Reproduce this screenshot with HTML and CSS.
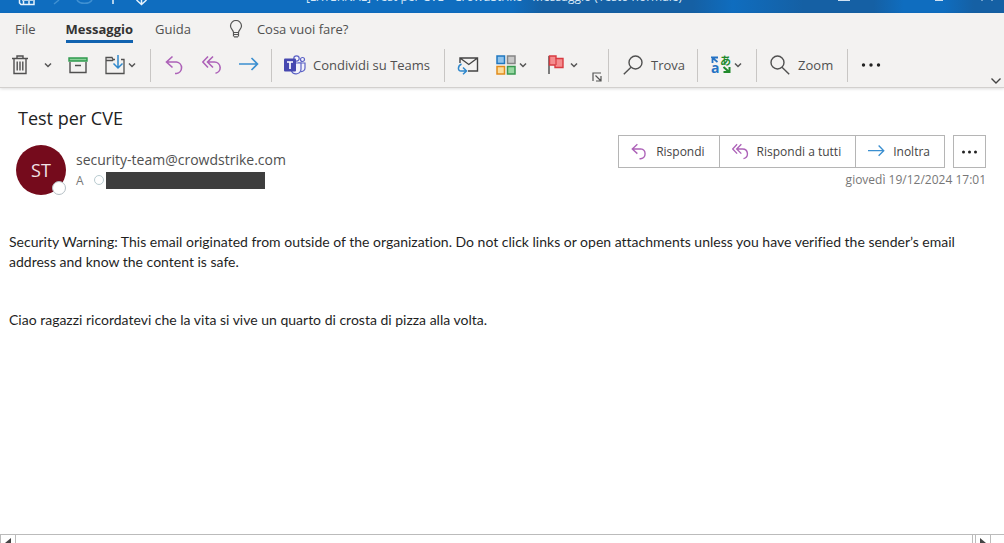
FILE: index.html
```html
<!DOCTYPE html>
<html lang="it">
<head>
<meta charset="utf-8">
<meta name="viewport" content="width=device-width, initial-scale=1">
<title>Test per CVE - Messaggio</title>
<link rel="stylesheet" href="styles.css">
</head>
<body>
<svg class="sprite" aria-hidden="true">
  <symbol id="chevron" viewBox="0 0 8 6"><path d="M1 1.5l3 3 3-3" fill="none" stroke="#555" stroke-width="1.5"/></symbol>
  <symbol id="reply" viewBox="0 0 20 20"><path d="M7.500 1.500L1.500 7l6 5.500M2 7h9.500a5.800 5.800 0 0 1 0 11.500H10" fill="none" stroke="#ad62b8" stroke-width="1.600"/></symbol>
  <symbol id="reply-all" viewBox="0 0 20 20"><path d="M6 1.500L.8 7 6 12.500M11 1.500L5.500 7l5.500 5.500M6 7h6.500a5.700 5.700 0 0 1 1 11.300" fill="none" stroke="#ad62b8" stroke-width="1.600"/></symbol>
  <symbol id="forward" viewBox="0 0 20 20"><path d="M0 9h18.500M12.500 3l6 6-6 6" fill="none" stroke="#3b8fd0" stroke-width="1.600"/></symbol>
</svg>

<header class="titlebar">
  <svg width="150" height="13" viewBox="0 0 150 13" fill="none" stroke="#e6f2fc" stroke-width="1.500" aria-hidden="true">
    <path d="M19.500 0v3l1.500 1.500h13V0M22 0h11M23.500 4.500V1M29 4.500V1"/>
    <path d="M54 4l5-4M77 0a8 5 0 0 0 15 0" stroke="#3f90d2"/>
    <path d="M113 0v4M136.500 0l5 4.500 5-4.500M141.500 0v4"/>
  </svg>
  <div class="window-title">[EXTERNAL] Test per CVE - CrowdStrike - Messaggio (Testo normale)</div>
  <svg width="166" height="13" viewBox="0 0 166 13" fill="none" stroke="#cfe2f3" stroke-width="1" aria-hidden="true"><path d="M0 .5h12M97 .5h8M144 0v1M154 0v1"/></svg>
</header>

<div class="ribbon">
  <nav class="tabs">
    <a href="#file">File</a>
    <a href="#messaggio" class="active" aria-current="page">Messaggio</a>
    <a href="#guida">Guida</a>
    <button class="tellme" type="button">
      <svg width="14" height="18" viewBox="0 0 14 18" fill="none" stroke="#555" stroke-width="1.200" aria-hidden="true"><path d="M4.500 12.500C4.500 10 1.500 9 1.500 6a5.500 5.500 0 0 1 11 0c0 3-3 4-3 6.500zM4.500 14.500h5M5 16.800h4M4.500 12.500v4M9.500 12.500v4"/></svg>
      <span>Cosa vuoi fare?</span>
    </button>
  </nav>

  <div class="toolbar">
    <div class="group manage">
      <button type="button" aria-label="Elimina"><svg width="18" height="20" viewBox="0 0 18 20" fill="none" stroke="#505050" stroke-width="1.400"><path d="M1 3.500h16M6 3V1h6v2M3 4v14.500h12V4M6.200 6.500v9M9 6.500v9M11.800 6.500v9"/></svg></button>
      <button type="button" class="drop" aria-label="Opzioni elimina"><svg width="8" height="6"><use href="#chevron"/></svg></button>
      <button type="button" aria-label="Archivia"><svg width="20" height="18" viewBox="0 0 20 18" fill="none" stroke="#505050" stroke-width="1.400"><path d="M2 6v10.500h16V6M7 9.500h6"/><path d="M1 2h18v3H1z" fill="#8bd19a" stroke="#2f9a4e"/></svg></button>
      <button type="button" class="move" aria-label="Sposta"><svg width="20" height="20" viewBox="0 0 20 20" fill="none" stroke="#505050" stroke-width="1.300"><path d="M10 4.500H8l-1-2H1v16h18v-14h-3M1 5.500h6.500l1-1"/><path d="M13 0v12.500M8.500 8.500l4.500 4.500 4.500-4.500" stroke="#2f88cc" stroke-width="1.500"/></svg><svg width="8" height="6"><use href="#chevron"/></svg></button>
    </div>
    <div class="group reply">
      <button type="button" aria-label="Rispondi"><svg width="20" height="20"><use href="#reply"/></svg></button>
      <button type="button" aria-label="Rispondi a tutti"><svg width="20" height="20"><use href="#reply-all"/></svg></button>
      <button type="button" aria-label="Inoltra"><svg width="20" height="20"><use href="#forward"/></svg></button>
    </div>
    <div class="group teams">
      <button type="button"><svg width="22" height="20" viewBox="0 0 22 20" aria-hidden="true"><g fill="#f3f3fb" stroke="#5b62c5" stroke-width="1.200"><circle cx="18.500" cy="4.500" r="2"/><path d="M14 8h7v5a3.500 3.500 0 0 1-4 3.500"/><circle cx="12.500" cy="3.500" r="2.700"/><path d="M7 8h10v6a5 5 0 0 1-9.500 2z"/></g><rect y="3.500" width="12" height="13" rx="1" fill="#4648b0"/><path d="M3 7h6M6 7v7" stroke="#fff" stroke-width="1.700"/></svg><span>Condividi su Teams</span></button>
    </div>
    <div class="group tags">
      <button type="button" aria-label="Segna come da leggere"><svg width="22" height="20" viewBox="0 0 22 20" fill="none" stroke="#444" stroke-width="1.400"><path d="M3 8V3h17.500v13H11M3 3l8.800 6.500L20.500 3"/><path d="M4.500 9C.5 11 .5 16 4 16h5M6 12.500L9.500 16 6 19.300" stroke="#2f88cc" stroke-width="1.500"/></svg></button>
      <button type="button" aria-label="Categorizza"><svg width="20" height="20" viewBox="0 0 20 20" stroke-width="1.500"><path d="M1 1h7.500v7.500H1z" fill="#8fc3ec" stroke="#2078c0"/><path d="M11.500 1H19v7.500h-7.500z" fill="#c8c8c8" stroke="#858585"/><path d="M1 11.500h7.500V19H1z" fill="#fbdd9c" stroke="#e18c1d"/><path d="M11.500 11.500H19V19h-7.500z" fill="#97d7a2" stroke="#389850"/></svg><svg width="8" height="6"><use href="#chevron"/></svg></button>
      <button type="button" class="flag" aria-label="Completa"><svg width="16" height="20" viewBox="0 0 16 20"><path d="M1 1v18" stroke="#555" stroke-width="1.500"/><path d="M1.500 1H8v2.500h7v9H7V10H1.500z" fill="#f58c8e" stroke="#d83b41" stroke-width="1.400"/><path d="M8 3.500V10" stroke="#d83b41" stroke-width="1.200"/></svg><svg width="8" height="6"><use href="#chevron"/></svg></button>
      <button type="button" class="launcher" aria-label="Opzioni messaggio"><svg width="10" height="10" viewBox="0 0 10 10" fill="none" stroke="#555" stroke-width="1.200"><path d="M1 9V1h8M3.500 3.500l5 5M9 4v5H4"/></svg></button>
    </div>
    <div class="group find">
      <button type="button"><svg width="20" height="20" viewBox="0 0 20 20" fill="none" stroke="#505050" stroke-width="1.400" aria-hidden="true"><circle cx="12.500" cy="7.500" r="6.500"/><path d="M8 12.200L.8 19.200"/></svg><span>Trova</span></button>
    </div>
    <div class="group translate">
      <button type="button" aria-label="Traduci"><svg width="20" height="24" viewBox="0 0 20 24"><text class="glyph-latin" x="0" y="20">a</text><text class="glyph-kana" x="9" y="12">あ</text><path d="M1.500 10V5M7 4.500H1L6.500 9" fill="none" stroke="#2572c4" stroke-width="1.800"/><path d="M18.500 14v5h-6M12.500 14l5 4.500" fill="none" stroke="#218a2c" stroke-width="2"/></svg><svg width="8" height="6"><use href="#chevron"/></svg></button>
    </div>
    <div class="group zoom">
      <button type="button"><svg width="20" height="20" viewBox="0 0 20 20" fill="none" stroke="#505050" stroke-width="1.400" aria-hidden="true"><circle cx="7.500" cy="7.500" r="6.500"/><path d="M12 12.200l7.200 7"/></svg><span>Zoom</span></button>
    </div>
    <button type="button" class="overflow" aria-label="Altri comandi"><svg width="20" height="4" viewBox="0 0 20 4" fill="#222"><circle cx="2.500" cy="2" r="1.700"/><circle cx="10" cy="2" r="1.700"/><circle cx="17.500" cy="2" r="1.700"/></svg></button>
    <button type="button" class="collapse" aria-label="Espandi barra multifunzione"><svg width="12" height="8" viewBox="0 0 12 8" fill="none" stroke="#444" stroke-width="1.400"><path d="M1.500 1.500L6 6l4.500-4.500"/></svg></button>
  </div>
</div>

<main class="message">
  <h1>Test per CVE</h1>
  <section class="envelope">
    <div class="avatar">ST<span class="presence"></span></div>
    <div class="sender">
      <div class="from">security-team@crowdstrike.com</div>
      <div class="to"><span>A</span><span class="status"></span><span class="redacted"></span></div>
    </div>
    <div class="side">
      <div class="actions">
        <div class="joined">
          <button type="button"><svg width="17" height="17" aria-hidden="true"><use href="#reply"/></svg>Rispondi</button>
          <button type="button"><svg width="17" height="17" aria-hidden="true"><use href="#reply-all"/></svg>Rispondi a tutti</button>
          <button type="button"><svg width="17" height="17" aria-hidden="true"><use href="#forward"/></svg>Inoltra</button>
        </div>
        <button type="button" class="more" aria-label="Altre azioni"><svg width="17" height="4" viewBox="0 0 17 4" fill="#222"><circle cx="2.500" cy="2" r="1.500"/><circle cx="8.500" cy="2" r="1.500"/><circle cx="14.500" cy="2" r="1.500"/></svg></button>
      </div>
      <time datetime="2024-12-19T17:01">giovedì 19/12/2024 17:01</time>
    </div>
  </section>
  <article class="content">
    <p>Security Warning: This email originated from outside of the organization. Do not click links or open attachments unless you have verified the sender’s email address and know the content is safe.</p>
    <p>Ciao ragazzi ricordatevi che la vita si vive un quarto di crosta di pizza alla volta.</p>
  </article>
</main>

<footer class="scrollbar">
  <button type="button" aria-label="Scorri a sinistra"><svg width="6" height="10" viewBox="0 0 6 10"><path d="M6 0v10L0 5z" fill="#444"/></svg></button>
  <div class="thumb"></div>
  <button type="button" aria-label="Scorri a destra"><svg width="6" height="10" viewBox="0 0 6 10"><path d="M0 0v10l6-5z" fill="#444"/></svg></button>
</footer>
</body>
</html>
```

FILE: styles.css
```css
* { box-sizing: border-box; }
body {
  margin: 0;
  height: 100vh;
  display: flex;
  flex-direction: column;
  overflow: hidden;
  background: #fff;
  color: #505050;
  font-family: "Open Sans", "Noto Sans", sans-serif;
  font-size: 13px;
}
button {
  display: inline-flex;
  align-items: center;
  margin: 0;
  padding: 0;
  border: 0;
  background: none;
  color: inherit;
  font: inherit;
  white-space: nowrap;
}
svg { flex: none; display: block; }
.sprite { position: absolute; width: 0; height: 0; }

.titlebar {
  flex: none;
  display: flex;
  align-items: flex-end;
  justify-content: space-between;
  height: 13px;
  overflow: hidden;
  background: linear-gradient(90deg, #0f6dbf 51%, #1560a4 54%, #1560a4 69%, #0f6dbf 73%, #1560a4 80%, #1560a4 87%, #0f6dbf 90%, #0f6dbf 94%, #1560a4 97%);
}
.window-title { padding-bottom: 7px; line-height: 18px; font-size: 12px; color: #d6e7f6; white-space: nowrap; }

.ribbon {
  flex: none;
  background: #f3f2f1;
  border-bottom: 1px solid #d2d0ce;
  box-shadow: 0 1px 3px #00000022;
}
.tabs { display: flex; align-items: flex-start; gap: 22px; padding: 6px 15px 0; height: 32px; line-height: 20px; }
.tabs a { color: inherit; text-decoration: none; height: 24px; }
.tabs a.active { margin-left: 8px; font-weight: 700; color: #333; border-bottom: 3px solid #1163b0; }
.tellme { margin-left: 16px; gap: 14px; height: 20px; }

.toolbar { display: flex; align-items: center; height: 42px; padding: 0 0 2px 11px; }
.group { display: flex; align-items: center; height: 33px; border-right: 1px solid #c8c6c4; }
.manage { padding-right: 14px; }
.manage .drop { margin: 0 16px 0 15px; }
.manage .move { margin-left: 17px; gap: 3px; }
.reply { gap: 17px; padding: 0 12px 0 14px; }
.teams { padding: 0 14px 0 12px; }
.teams button { gap: 7px; }
.find button, .zoom button { gap: 8px; }
.tags { padding: 0 6px 0 12px; }
.tags button { gap: 3px; margin-right: 17px; }
.tags .flag { gap: 6px; margin: 0 14px 0 4px; }
.tags .launcher { align-self: flex-end; margin: 0; }
.find { padding: 0 12px 0 14px; }
.translate { padding: 0 14px 0 13px; }
.translate button { gap: 3px; }
.zoom { padding: 0 14px 0 13px; }
.glyph-latin { font: 700 14px "Open Sans", sans-serif; fill: #2572c4; }
.glyph-kana { font: 700 11px "Noto Sans CJK JP", sans-serif; fill: #218a2c; }
.overflow { margin-left: 13px; }
.collapse { align-self: flex-end; margin: 0 2px 0 auto; }

.message { flex: 1; min-height: 0; padding: 16px 18px 0 9px; }
h1 { margin: 0 0 0 9px; color: #222; font-size: 18px; font-weight: 400; line-height: 28px; }
.envelope { display: flex; align-items: flex-start; margin-top: 3px; padding-left: 7px; }
.avatar {
  position: relative;
  flex: none;
  width: 50px;
  height: 50px;
  margin-top: 10px;
  border-radius: 50%;
  background: #750b1c;
  color: #f2e4e6;
  font-size: 18px;
  line-height: 50px;
  text-align: center;
}
.presence { position: absolute; right: 0; bottom: 0; width: 14px; height: 14px; border: 1px solid #b4bec4; border-radius: 50%; background: #fff; }
.sender { margin: 15px 0 0 10px; }
.from { font-size: 14px; line-height: 20px; }
.to { display: flex; align-items: center; height: 20px; font-size: 12px; color: #777; }
.status { width: 10px; height: 10px; margin: 0 2px 0 10px; border: 1px solid #b9cbd0; border-radius: 50%; }
.redacted { width: 159px; height: 17px; background: #3e3e3e; }
.side { margin-left: auto; text-align: right; }
.actions { display: flex; justify-content: flex-end; gap: 8px; font-size: 12px; color: #444; }
.joined { display: flex; border: 1px solid #b5b5b5; }
.joined button { height: 31px; padding: 0 14px 0 12px; gap: 8px; }
.joined button + button { border-left: 1px solid #b5b5b5; }
.actions .more { width: 33px; justify-content: center; border: 1px solid #b5b5b5; }
.side time { display: block; margin-top: 3px; font-size: 12px; line-height: 18px; color: #777; }

.content { margin-top: 37px; color: #1f1f1f; font-family: Lato, sans-serif; font-size: 14px; line-height: 20px; font-variant-ligatures: none; }
.content p { margin: 0 0 38px; }

.scrollbar { flex: none; display: flex; height: 9px; padding-right: 13px; overflow: hidden; border-top: 1px solid #bbb; }
.scrollbar button { width: 16px; height: 16px; justify-content: center; border: 1px solid #bbb; border-top: 0; }
.thumb { flex: 1; margin-right: 2px; border-right: 1px solid #bbb; }
```
